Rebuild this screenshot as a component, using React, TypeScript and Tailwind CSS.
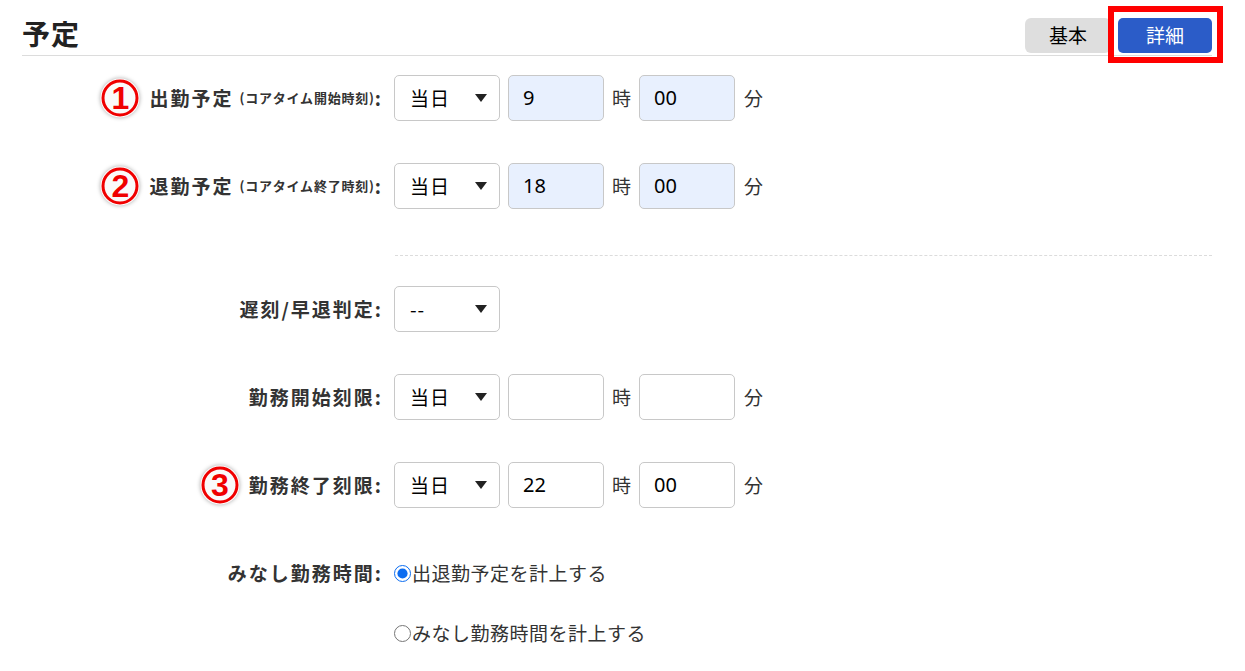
import React from "react";

const font = { fontFamily: '"Noto Sans CJK JP", "Noto Sans", sans-serif' };

function Badge({ n }: { n: string }) {
  return (
    <span className="relative inline-flex items-center justify-center w-[42px] h-[42px] mr-[8px] tracking-normal">
      <svg width="42" height="42" viewBox="0 0 42 42" className="absolute inset-0" style={{ filter: "drop-shadow(0 0 2px rgba(0,0,0,0.35))" }}>
        <circle cx="21" cy="21" r="19.5" fill="#fff" />
        <circle cx="21" cy="21" r="17" fill="#fafafa" stroke="#f00000" strokeWidth="3" />
      </svg>
      <span className="relative text-[#f00000] text-[32px] font-bold leading-none" style={{ fontFamily: '"Liberation Sans", Arial, sans-serif' }}>{n}</span>
    </span>
  );
}

function Select({ value }: { value: string }) {
  return (
    <div className="flex items-center justify-between w-[106px] h-[46px] border border-[#c8c8c8] rounded-[5px] bg-white pl-[15px] pr-[12px]">
      <span className="text-[19px] tracking-[1px] text-black">{value}</span>
      <svg width="12" height="8" viewBox="0 0 12 8"><path d="M0 0H12L6 8Z" fill="#222" /></svg>
    </div>
  );
}

function Input({ value, filled }: { value: string; filled?: boolean }) {
  return (
    <div className={`flex items-center w-[96px] h-[46px] border border-[#c8c8c8] rounded-[5px] pl-[14px] text-[20px] text-black ${filled ? "bg-[#e8f0fe]" : "bg-white"}`} style={{ fontFamily: '"Noto Sans", "Noto Sans CJK JP", sans-serif' }}>
      {value}
    </div>
  );
}

function TimeRow({ hour, min, filled }: { hour: string; min: string; filled?: boolean }) {
  return (
    <div className="flex items-center">
      <Select value="当日" />
      <div className="ml-[8px]"><Input value={hour} filled={filled} /></div>
      <span className="mx-[8px] text-[19px] text-[#333]">時</span>
      <Input value={min} filled={filled} />
      <span className="ml-[9px] text-[19px] text-[#333]">分</span>
    </div>
  );
}

function Row({ label, children, className = "" }: { label: React.ReactNode; children: React.ReactNode; className?: string }) {
  return (
    <div className={`flex items-center ${className}`}>
      <div className="w-[361px] flex items-center justify-end text-[19px] tracking-[2px] font-bold text-[#333]">{label}</div>
      <div className="ml-[11px]">{children}</div>
    </div>
  );
}

export default function App() {
  return (
    <div className="w-[1245px] h-[671px] bg-white overflow-hidden pl-[22px]" style={font}>
      <div className="w-[1190px]">
        <div className="flex items-end justify-between h-[56px] border-b border-[#dcdcdc]">
          <h1 className="text-[28px] font-bold text-[#222] leading-none mb-[8px] tracking-[1px]">予定</h1>
          <div className="flex items-center mb-[2px]">
            <div className="w-[86px] h-[35px] flex items-center justify-center bg-[#dedede] rounded-[6px] text-[19px] text-black">基本</div>
            <div className="relative ml-[7px]">
              <div className="w-[94px] h-[35px] flex items-center justify-center bg-[#2b5cc8] rounded-[5px] text-[19px] text-white">詳細</div>
              <div className="absolute left-[-10px] top-[-12px] w-[115px] h-[57px] border-[6px] border-[#ff0000]" />
            </div>
          </div>
        </div>

        <Row className="mt-[19px]" label={<><Badge n="1" />出勤予定<span className="text-[13px] ml-[6px] tracking-[0.8px]">(コアタイム開始時刻)</span>:</>}>
          <TimeRow hour="9" min="00" filled />
        </Row>
        <Row className="mt-[42px]" label={<><Badge n="2" />退勤予定<span className="text-[13px] ml-[6px] tracking-[0.8px]">(コアタイム終了時刻)</span>:</>}>
          <TimeRow hour="18" min="00" filled />
        </Row>

        <div className="ml-[373px] mt-[46px] border-t border-dashed border-[#dcdcdc]" />

        <Row className="mt-[30px]" label="遅刻/早退判定:">
          <Select value="--" />
        </Row>
        <Row className="mt-[42px]" label="勤務開始刻限:">
          <TimeRow hour="" min="" />
        </Row>
        <Row className="mt-[42px]" label={<><Badge n="3" />勤務終了刻限:</>}>
          <TimeRow hour="22" min="00" />
        </Row>
        <Row className="mt-[42px] h-[46px]" label="みなし勤務時間:">
          <label className="flex items-center text-[19px] tracking-[0.5px] text-[#333]">
            <input type="radio" defaultChecked name="m" className="w-[17px] h-[17px] m-0 mr-[1px] accent-[#0b6cf0]" />
            出退勤予定を計上する
          </label>
        </Row>
        <Row className="mt-[14px] h-[46px]" label="">
          <label className="flex items-center text-[19px] tracking-[0.5px] text-[#333]">
            <input type="radio" name="m" className="w-[17px] h-[17px] m-0 mr-[1px]" />
            みなし勤務時間を計上する
          </label>
        </Row>
      </div>
    </div>
  );
}
